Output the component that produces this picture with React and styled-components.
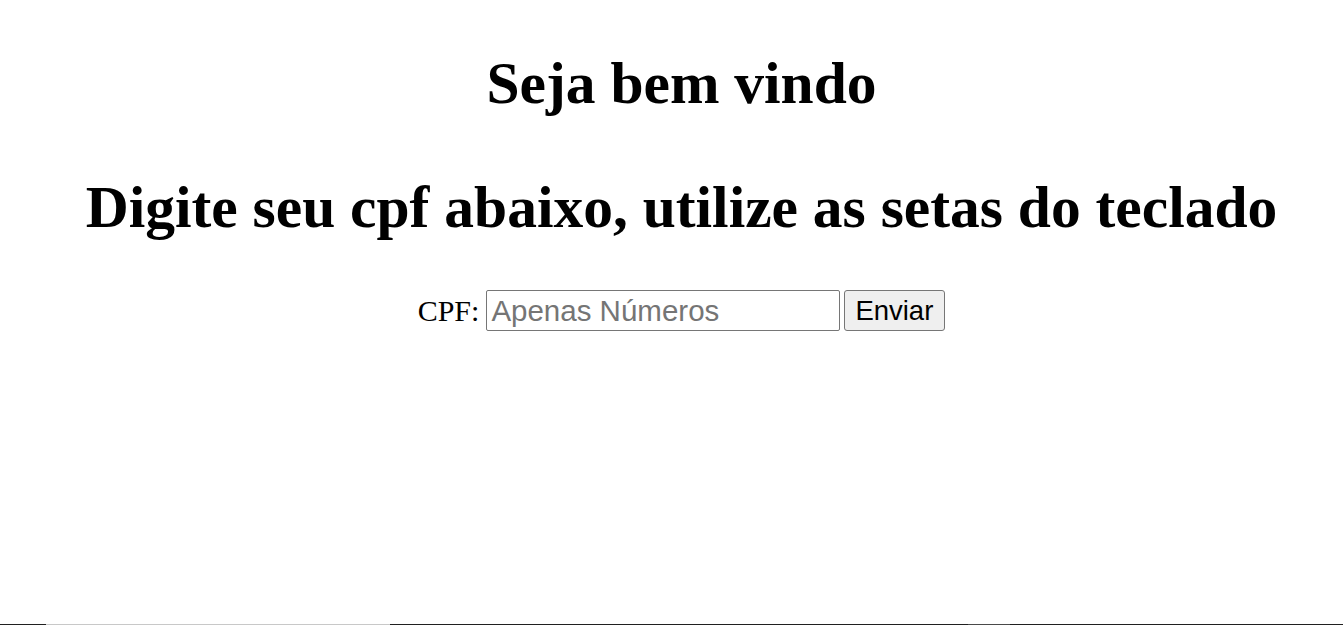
import React, { useState } from "react";
import styled, { createGlobalStyle } from "styled-components";

const GlobalStyle = createGlobalStyle`
    html, body {
        margin: 0;
        padding: 0;
        background: #ffffff;
    }
    body {
        font-family: "Liberation Serif", "Times New Roman", serif;
        color: #000000;
    }
`;

const Page = styled.div`
    min-height: 100vh;
    display: flex;
    flex-direction: column;
    box-sizing: border-box;
`;

const Content = styled.main`
    flex: 1;
    display: flex;
    flex-direction: column;
    align-items: center;
    padding: 49px 0 0 20px;
`;

const Title = styled.h1`
    margin: 0 0 ${(props) => props.$gap || 0}px;
    font-family: "Liberation Serif", "Times New Roman", serif;
    font-size: 59.5px;
    font-weight: bold;
    line-height: 68px;
    text-align: center;
    white-space: nowrap;
`;

const Form = styled.form`
    display: flex;
    align-items: center;
    gap: 4px;
`;

const Label = styled.label`
    font-family: "Liberation Serif", "Times New Roman", serif;
    font-size: 30px;
    margin-right: 3px;
`;

const Input = styled.input`
    box-sizing: border-box;
    width: 354px;
    height: 41px;
    padding: 1px 4px;
    border: 1px solid #767676;
    border-radius: 2px;
    font-family: "Liberation Sans", Arial, sans-serif;
    font-size: 29.5px;
    color: #000000;
    outline: none;

    &::placeholder {
        color: #757575;
    }
`;

const Button = styled.button`
    box-sizing: border-box;
    height: 41px;
    padding: 0 11px 0 10px;
    border: 1px solid #767676;
    border-radius: 3px;
    background: #efefef;
    font-family: "Liberation Sans", Arial, sans-serif;
    font-size: 27.5px;
    color: #000000;
`;

const Taskbar = styled.div`
    display: flex;
    height: 1px;
    background: #202020;
`;

const TaskSegment = styled.span`
    width: ${(props) => props.$width}px;
    margin-left: ${(props) => props.$offset}px;
    background: ${(props) => props.$color};
`;

export default function App() {
    const [cpf, setCpf] = useState("");

    function submitHandler(event) {
        event.preventDefault();
    }

    return (
        <>
            <GlobalStyle />
            <Page>
                <Content>
                    <Title $gap={56}>Seja bem vindo</Title>
                    <Title $gap={49}>Digite seu cpf abaixo, utilize as setas do teclado</Title>
                    <Form onSubmit={submitHandler}>
                        <Label htmlFor="cpf">CPF:</Label>
                        <Input
                            type="text"
                            id="cpf"
                            placeholder="Apenas Números"
                            value={cpf}
                            onChange={(e) => setCpf(e.target.value)}
                        />
                        <Button type="submit">Enviar</Button>
                    </Form>
                </Content>
                <Taskbar>
                    <TaskSegment $offset={46} $width={344} $color="#c8c8c8" />
                    <TaskSegment $offset={578} $width={42} $color="#4a4a4a" />
                </Taskbar>
            </Page>
        </>
    );
}
